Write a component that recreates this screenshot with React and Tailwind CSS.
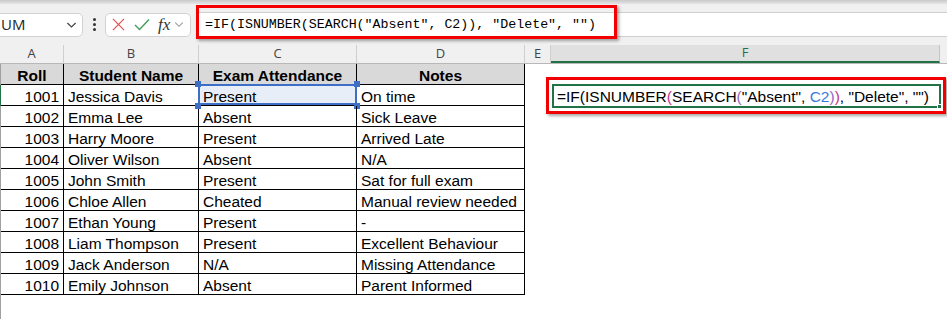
import React from "react";

const rows = [
  ["1001", "Jessica Davis", "Present", "On time"],
  ["1002", "Emma Lee", "Absent", "Sick Leave"],
  ["1003", "Harry Moore", "Present", "Arrived Late"],
  ["1004", "Oliver Wilson", "Absent", "N/A"],
  ["1005", "John Smith", "Present", "Sat for full exam"],
  ["1006", "Chloe Allen", "Cheated", "Manual review needed"],
  ["1007", "Ethan Young", "Present", "-"],
  ["1008", "Liam Thompson", "Present", "Excellent Behaviour"],
  ["1009", "Jack Anderson", "N/A", "Missing Attendance"],
  ["1010", "Emily Johnson", "Absent", "Parent Informed"],
];

function Chevron({ className }) {
  return (
    <svg viewBox="0 0 12 8" className={className} fill="none" stroke="currentColor" strokeWidth="1.3">
      <path d="M1.5 1.8 L6 6.2 L10.5 1.8" />
    </svg>
  );
}

function Toolbar() {
  return (
    <div className="h-[45px] bg-[#f0f0f0] relative">
      <div className="h-[4px] bg-gradient-to-b from-[#c9c9c9] to-[#e6e6e6]" />
      <div className="flex items-center mt-[8px] h-[25px]">
        <div className="-ml-[6px] w-[89px] h-[24px] bg-white border border-[#d2d2d2] rounded-[5px] flex items-center justify-between pl-[6px] pr-[5px]">
          <span className="text-[15px] text-[#1f1f1f] font-['Open_Sans']">UM</span>
          <Chevron className="w-[11px] h-[8px] text-[#444]" />
        </div>
        <div className="w-[22px] flex flex-col items-center gap-[2px]">
          <span className="w-[3px] h-[3px] rounded-full bg-[#333]" />
          <span className="w-[3px] h-[3px] rounded-full bg-[#333]" />
          <span className="w-[3px] h-[3px] rounded-full bg-[#333]" />
        </div>
        <div className="w-[86px] h-[24px] bg-white border border-[#d2d2d2] rounded-[5px] flex items-center pl-[6px]">
          <svg viewBox="0 0 14 14" className="w-[13px] h-[13px]" stroke="#e2504f" strokeWidth="1.3">
            <path d="M1 1 L13 13 M13 1 L1 13" />
          </svg>
          <svg viewBox="0 0 16 13" className="ml-[9px] w-[16px] h-[13px]" fill="none" stroke="#3f9d5a" strokeWidth="1.4">
            <path d="M1 7 L5.5 11.5 L15 1.5" />
          </svg>
          <span className="ml-[8px] text-[17px] italic font-['Liberation_Serif'] text-[#333] leading-none">fx</span>
          <Chevron className="ml-[4px] w-[10px] h-[7px] text-[#9a9a9a]" />
        </div>
        <div className="ml-[8px] flex-1 h-[25px] bg-white border-y border-[#cfcfcf] flex items-center pl-[6px]">
          <span className="font-['Liberation_Mono'] text-[13.3px] text-black whitespace-pre">
            =IF(ISNUMBER(SEARCH("Absent", C2)), "Delete", "")
          </span>
        </div>
      </div>
      <div className="absolute left-[196px] top-[5px] w-[421px] h-[34px] border-[3px] border-[#f20000] shadow-[2px_2px_3px_rgba(0,0,0,0.35)]" />
    </div>
  );
}

function ColumnHeaders() {
  const cols = [
    ["A", "w-[64px]"],
    ["B", "w-[135px]"],
    ["C", "w-[158px]"],
    ["D", "w-[168px]"],
    ["E", "w-[26px]"],
  ];
  return (
    <div className="flex h-[19px] bg-[#f0f0f0] border-b border-[#b8b8b8] text-[13px] text-[#444] font-['Open_Sans']">
      {cols.map(([l, w]) => (
        <div key={l} className={`${w} border-r border-[#cfcfcf] flex items-center justify-center`}>
          {l}
        </div>
      ))}
      <div className="w-[389px] bg-[#e0e0e0] border-r border-[#c4c4c4] border-b-2 border-b-[#217346] flex items-center justify-center text-[#217346]">
        F
      </div>
      <div className="flex-1 bg-[#f0f0f0]" />
    </div>
  );
}

function Sheet() {
  return (
    <div className="relative font-['Liberation_Sans'] text-[15.5px] text-black">
      <div className="flex h-[21px]">
        <div className="w-[1px] bg-[#a0a0a0]" />
        <div className="flex bg-[#d9d9d9] border-b border-black font-bold">
          <div className="w-[63px] border-r border-black text-center leading-[20px] pt-[2px]">Roll</div>
          <div className="w-[135px] border-r border-black text-center leading-[20px] pt-[2px]">Student Name</div>
          <div className="w-[158px] border-r border-black text-center leading-[20px] pt-[2px]">Exam Attendance</div>
          <div className="w-[168px] border-r border-black text-center leading-[20px] pt-[2px]">Notes</div>
        </div>
      </div>
      {rows.map((r, i) => (
        <div key={r[0]} className="flex h-[21px]">
          <div className={i === 0 ? "w-[1px] bg-[#217346]" : "w-[1px] bg-[#a0a0a0]"} />
          <div className="flex border-b border-black">
            <div className="w-[63px] border-r border-black text-right pr-[4px] leading-[21px] pt-[1px]">{r[0]}</div>
            <div className="w-[135px] border-r border-black pl-[4px] leading-[21px] pt-[1px] whitespace-nowrap">{r[1]}</div>
            <div className="w-[158px] border-r border-black pl-[4px] leading-[21px] pt-[1px] relative">
              {i === 0 && (
                <>
                  <div className="absolute -left-[1px] -top-[1px] w-[159px] h-[21px] bg-[#e8eef8] border-2 border-[#3d6fc6]" />
                  <div className="absolute -left-[4px] -top-[4px] w-[6px] h-[6px] bg-[#3d6fc6]" />
                  <div className="absolute -right-[4px] -top-[4px] w-[6px] h-[6px] bg-[#3d6fc6]" />
                  <div className="absolute -left-[4px] -bottom-[4px] w-[6px] h-[6px] bg-[#3d6fc6]" />
                  <div className="absolute -right-[4px] -bottom-[4px] w-[6px] h-[6px] bg-[#3d6fc6]" />
                </>
              )}
              <span className="relative">{r[2]}</span>
            </div>
            <div className="w-[168px] border-r border-black pl-[4px] leading-[21px] pt-[1px] whitespace-nowrap">{r[3]}</div>
          </div>
        </div>
      ))}
      <div className="h-[24px] flex">
        <div className="w-[1px] bg-[#a0a0a0]" />
      </div>

      <div className="absolute left-[546px] top-[13px] w-[400px] h-[37px] border-[3px] border-[#f20000] shadow-[2px_2px_3px_rgba(0,0,0,0.35)] bg-white">
        <div className="absolute left-[3px] top-[4px] w-[389px] h-[24px] border-2 border-[#217346] flex items-center pl-[3px] pt-[1px] whitespace-pre">
          <span>=IF(ISNUMBER</span>
          <span className="text-[#c4358c]">(</span>
          <span>SEARCH</span>
          <span className="text-[#9566c8]">(</span>
          <span>"Absent", </span>
          <span className="text-[#3f78e0]">C2</span>
          <span className="text-[#9566c8]">)</span>
          <span className="text-[#c4358c]">)</span>
          <span>, "Delete", "")</span>
          <div className="absolute -right-[3px] -bottom-[3px] w-[5px] h-[5px] bg-[#217346] border border-white" />
        </div>
      </div>
    </div>
  );
}

export default function App() {
  return (
    <div className="w-[947px] h-[320px] bg-white overflow-hidden">
      <Toolbar />
      <ColumnHeaders />
      <Sheet />
    </div>
  );
}
